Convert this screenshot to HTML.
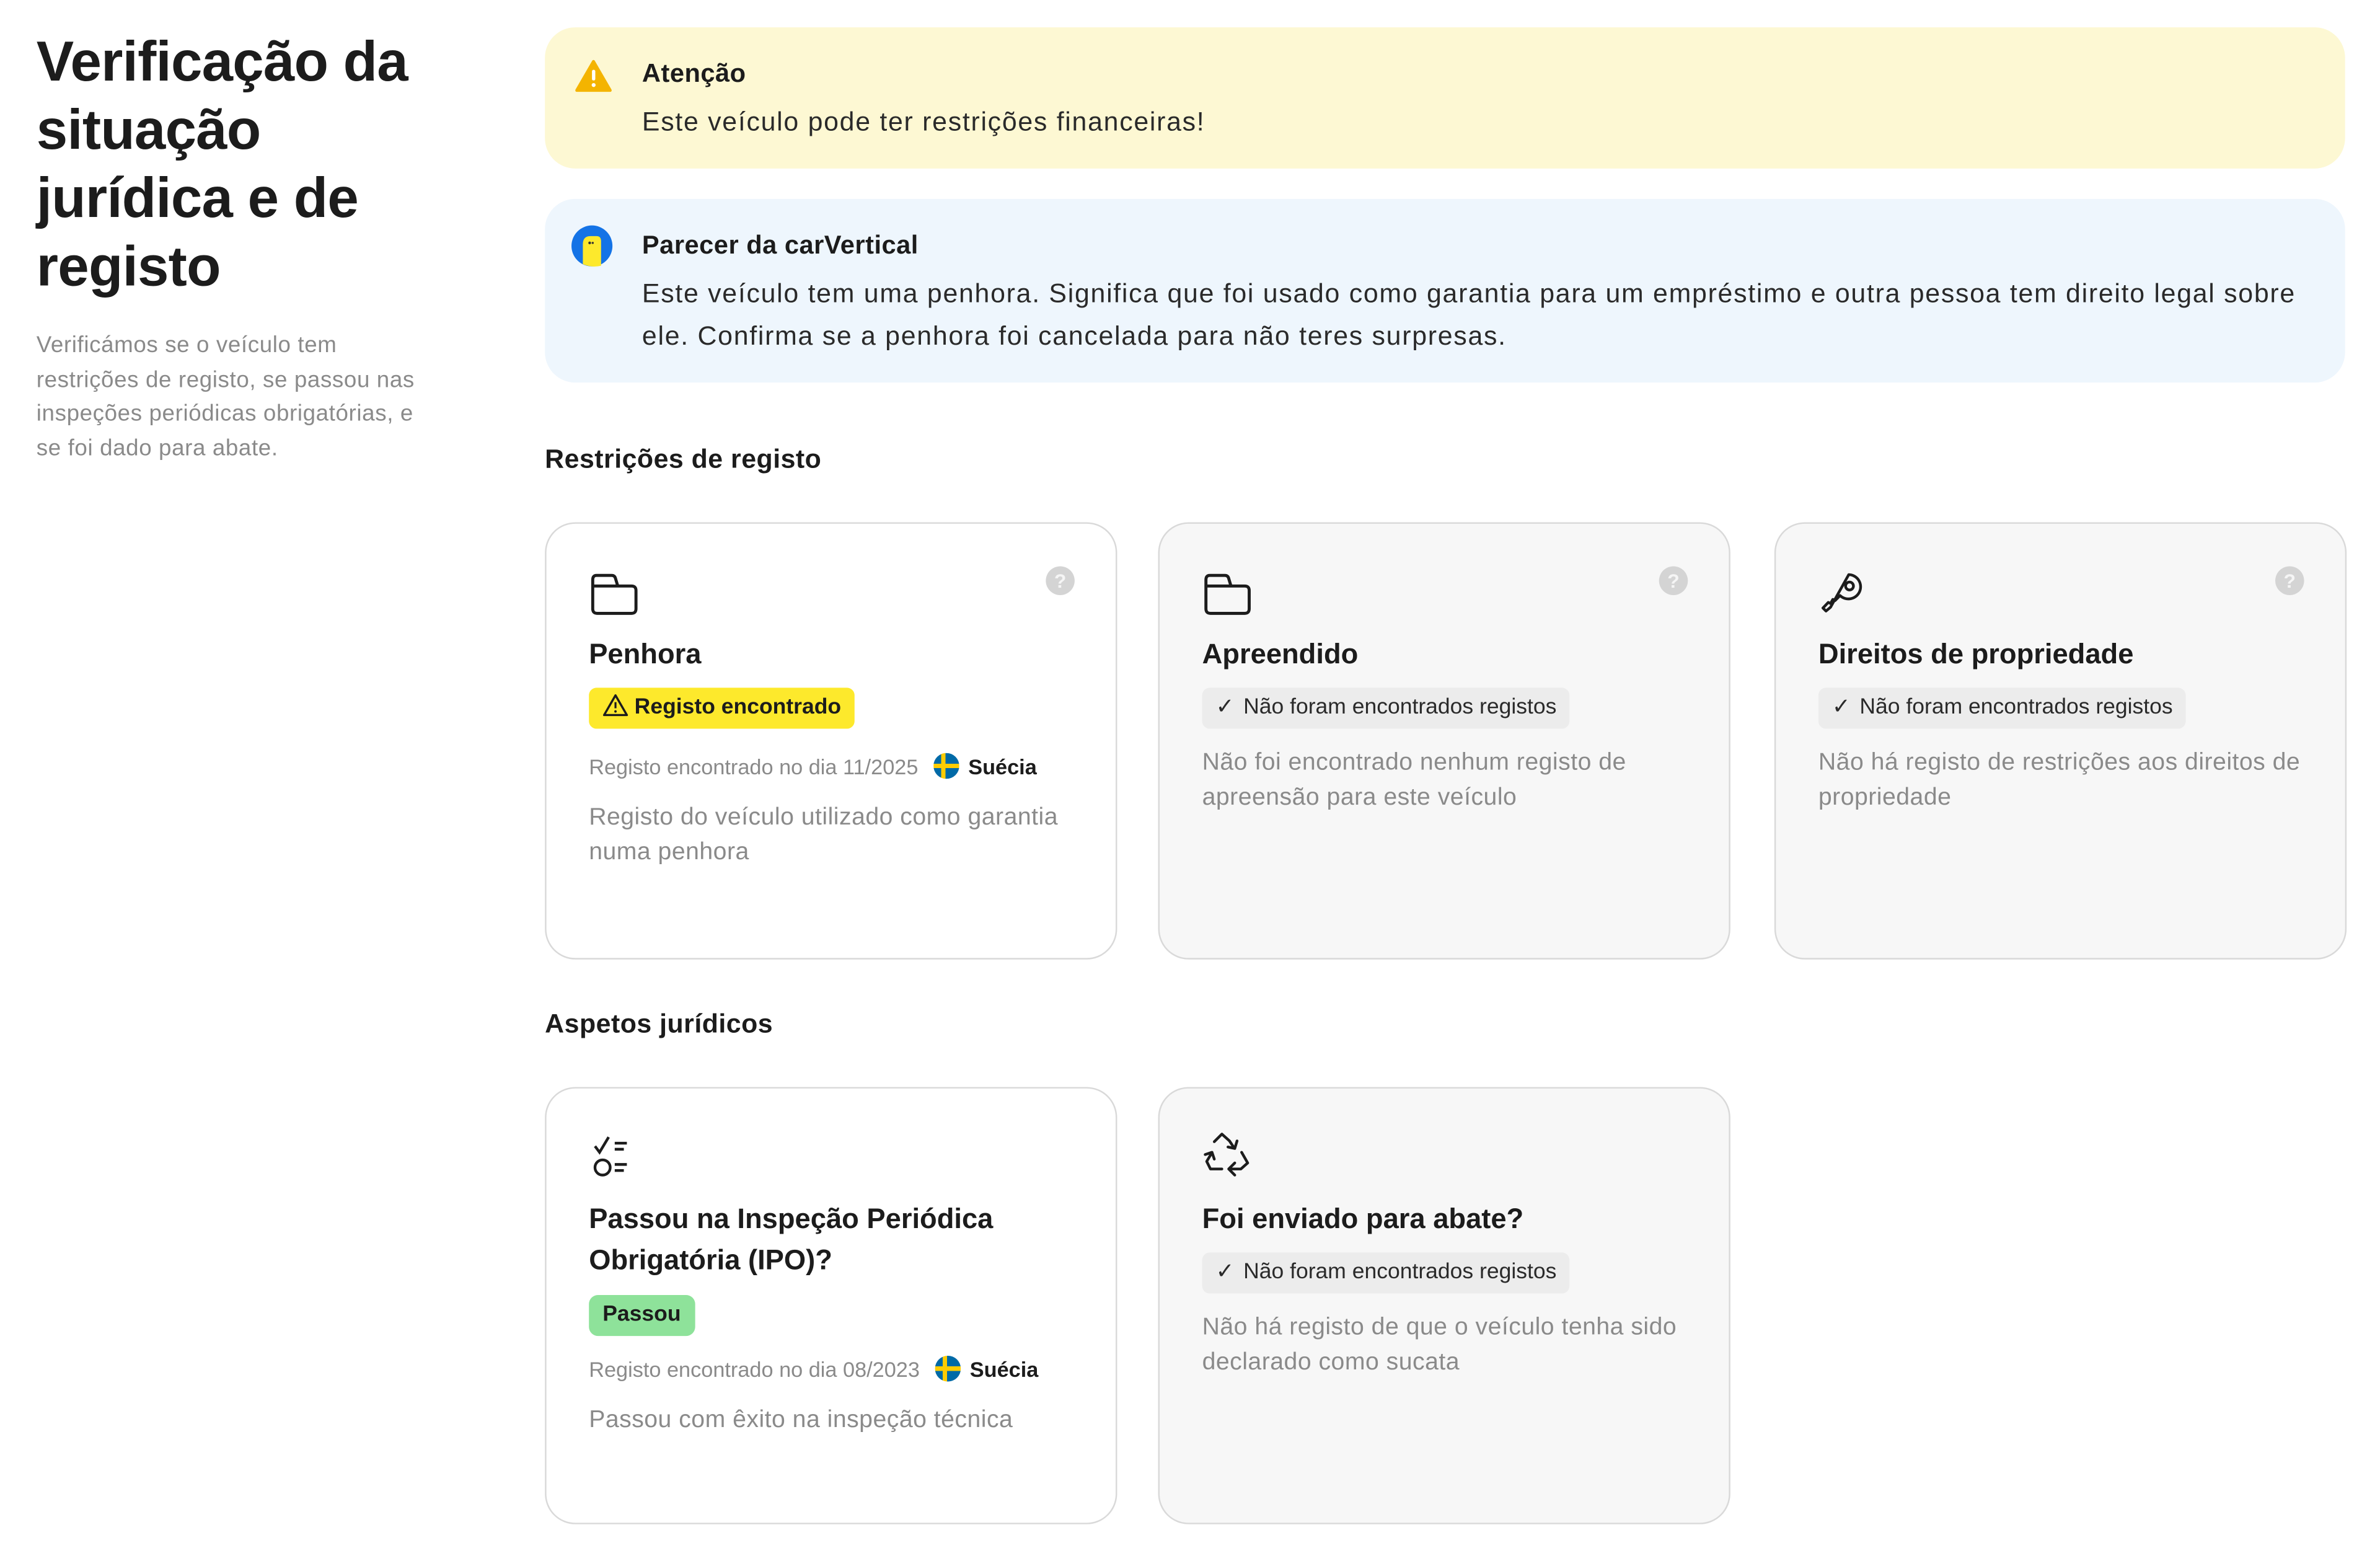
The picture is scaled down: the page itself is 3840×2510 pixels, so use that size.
<!DOCTYPE html>
<html><head><meta charset="utf-8">
<style>
*{box-sizing:border-box;margin:0;padding:0}
html,body{width:3840px;height:2510px;overflow:hidden;background:#fff}
#w{position:absolute;left:0;top:0;width:1568px;height:1025px;transform:scale(2.44898);transform-origin:0 0;font-family:"Liberation Sans",Arial,sans-serif;color:#1c1c1c}
.a{position:absolute}
h1{position:absolute;left:24px;top:18px;font-size:37px;line-height:45px;font-weight:700;letter-spacing:-0.3px;width:265px}
.desc{left:24px;top:217px;font-size:15px;line-height:22.7px;color:#8a8a8a;letter-spacing:0.25px;white-space:nowrap}
.box{left:359px;width:1186px;border-radius:20px}
.bt{font-size:17px;font-weight:700;letter-spacing:0.2px}
.bx{font-size:17.5px;line-height:28px;color:#2a2a2a;letter-spacing:0.7px}
.sec{left:359px;font-size:17.5px;font-weight:700;letter-spacing:0.2px}
.card{position:absolute;width:377px;height:288px;border:1.3px solid #d9d9d9;border-radius:20px;background:#f7f7f7}
.card.w{background:#fff}
.q{position:absolute;right:27px;top:28px;width:19px;height:19px;border-radius:50%;background:#d4d4d4;color:#f5f5f5;font-size:13px;font-weight:700;text-align:center;line-height:19px}
.ic{position:absolute;left:28px;top:30px}
.ct{position:absolute;left:28px;top:72px;font-size:18.5px;font-weight:700;line-height:27px;width:330px}
.badge{position:absolute;left:28px;height:27px;border-radius:5px;font-size:14.5px;line-height:27px;padding:0 9px 0 9px;white-space:nowrap}
.by{background:#fde92c;color:#1c1c1c;font-weight:700}
.bg{background:#8ee29a;font-weight:700}
.bn{background:#ececec;color:#2a2a2a}
.meta{position:absolute;left:28px;font-size:14px;color:#8a8a8a;white-space:nowrap;display:flex;align-items:center}
.meta b{color:#1c1c1c;margin-left:6px}
.flag{width:17px;height:17px;border-radius:50%;margin-left:10px;background:linear-gradient(90deg,transparent 5px,#fecc02 5px,#fecc02 8px,transparent 8px),linear-gradient(180deg,#006aa7 7px,#fecc02 7px,#fecc02 10px,#006aa7 10px)}
.cd{position:absolute;left:28px;width:330px;font-size:16px;line-height:22.5px;color:#8a8a8a;letter-spacing:0.2px}
</style></head><body><div id="w">
<h1>Verificação da situação jurídica e de registo</h1>
<div class="a desc">Verificámos se o veículo tem<br>restrições de registo, se passou nas<br>inspeções periódicas obrigatórias, e<br>se foi dado para abate.</div>

<div class="a box" style="top:18px;height:93px;background:#fdf8d3">
 <svg class="a" style="left:20px;top:21px" width="24" height="22" viewBox="0 0 24 22"><path d="M12 1.5 L23 20.5 H1 Z" fill="#f4b400" stroke="#f4b400" stroke-width="2" stroke-linejoin="round"/><rect x="11" y="7" width="2.2" height="7" rx="1" fill="#fff"/><circle cx="12.1" cy="17" r="1.3" fill="#fff"/></svg>
 <div class="a bt" style="left:64px;top:21px">Atenção</div>
 <div class="a bx" style="left:64px;top:48px">Este veículo pode ter restrições financeiras!</div>
</div>

<div class="a box" style="top:131px;height:121px;background:#eef6fd">
 <svg class="a" style="left:17px;top:17px" width="28" height="28" viewBox="0 0 28 28"><circle cx="14" cy="14" r="13.5" fill="#1473e6"/><path d="M8 13 Q8 7.5 13 7.5 H17 Q20 7.5 20 11 V27 Q14 28.5 8 26 Z" fill="#fde92c"/><circle cx="12.5" cy="12" r=".9" fill="#333"/><circle cx="14.5" cy="12" r=".7" fill="#333"/></svg>
 <div class="a bt" style="left:64px;top:21px">Parecer da carVertical</div>
 <div class="a bx" style="left:64px;top:48px;width:1110px">Este veículo tem uma penhora. Significa que foi usado como garantia para um empréstimo e outra pessoa tem direito legal sobre ele. Confirma se a penhora foi cancelada para não teres surpresas.</div>
</div>

<div class="a sec" style="top:292px">Restrições de registo</div>

<div class="card w" style="left:359px;top:344px">
 <svg class="ic" width="34" height="32" viewBox="0 0 34 32"><path d="M2.5 7 V26 Q2.5 29 5.5 29 H28 Q31 29 31 26 V14 Q31 11 28 11 H19 L17.5 6 Q17 4 15 4 H5 Q2.5 4 2.5 7 Z M2.5 11 H19" fill="none" stroke="#1c1c1c" stroke-width="2"/></svg>
 <div class="q">?</div>
 <div class="ct">Penhora</div>
 <div class="badge by" style="top:108px;padding-left:9px"><svg width="17" height="15" viewBox="0 0 17 15" style="vertical-align:-2px;margin-right:4px"><path d="M8.5 1 L16 14 H1 Z" fill="none" stroke="#1c1c1c" stroke-width="1.4" stroke-linejoin="round"/><path d="M8.5 5.5 V9.5" stroke="#1c1c1c" stroke-width="1.3"/><circle cx="8.5" cy="11.6" r=".8" fill="#1c1c1c"/></svg>Registo encontrado</div>
 <div class="meta" style="top:151px">Registo encontrado no dia 11/2025<span class="flag"></span><b>Suécia</b></div>
 <div class="cd" style="top:183px">Registo do veículo utilizado como garantia numa penhora</div>
</div>

<div class="card" style="left:763px;top:344px">
 <svg class="ic" width="34" height="32" viewBox="0 0 34 32"><path d="M2.5 7 V26 Q2.5 29 5.5 29 H28 Q31 29 31 26 V14 Q31 11 28 11 H19 L17.5 6 Q17 4 15 4 H5 Q2.5 4 2.5 7 Z M2.5 11 H19" fill="none" stroke="#1c1c1c" stroke-width="2"/></svg>
 <div class="q">?</div>
 <div class="ct">Apreendido</div>
 <div class="badge bn" style="top:108px"><span style="margin-right:6px">✓</span>Não foram encontrados registos</div>
 <div class="cd" style="top:147px">Não foi encontrado nenhum registo de apreensão para este veículo</div>
</div>

<div class="card" style="left:1169px;top:344px">
 <svg class="ic" width="32" height="32" viewBox="0 0 32 32"><path d="M20 3.5 A8 8 0 1 1 14.3 17.3 L11 20.6 L9.5 19.8 L8 22.5 L6.5 21.8 L3 25.5 L5 27.5 L8 25 Z" fill="none" stroke="#1c1c1c" stroke-width="1.8" stroke-linejoin="round"/><circle cx="20.5" cy="11" r="2.6" fill="none" stroke="#1c1c1c" stroke-width="1.8"/></svg>
 <div class="q">?</div>
 <div class="ct">Direitos de propriedade</div>
 <div class="badge bn" style="top:108px"><span style="margin-right:6px">✓</span>Não foram encontrados registos</div>
 <div class="cd" style="top:147px">Não há registo de restrições aos direitos de propriedade</div>
</div>

<div class="a sec" style="top:664px">Aspetos jurídicos</div>

<div class="card w" style="left:359px;top:716px">
 <svg class="ic" width="34" height="34" viewBox="0 0 34 34"><path d="M4 8 L7 12 L13 2" fill="none" stroke="#1c1c1c" stroke-width="1.8"/><path d="M17 6 H25 M17 10 H23 M17 20 H25 M17 24 H23" stroke="#1c1c1c" stroke-width="1.8"/><circle cx="9" cy="22" r="5" fill="none" stroke="#1c1c1c" stroke-width="1.8"/></svg>
 <div class="ct">Passou na Inspeção Periódica Obrigatória (IPO)?</div>
 <div class="badge bg" style="top:136px;border-radius:6px">Passou</div>
 <div class="meta" style="top:176px">Registo encontrado no dia 08/2023<span class="flag"></span><b>Suécia</b></div>
 <div class="cd" style="top:208px">Passou com êxito na inspeção técnica</div>
</div>

<div class="card" style="left:763px;top:716px">
 <svg class="ic" style="left:28px;top:28px" width="36" height="36" viewBox="0 0 36 36"><g fill="none" stroke="#1c1c1c" stroke-width="1.8" stroke-linecap="round" stroke-linejoin="round"><path d="M8 7 L13 2 L18 6.5 L21 11 M17 10.5 L21.5 11.5 L23 6.5"/><path d="M26 14 L30 21 L25.5 25 L18 25 M21.5 21 L17.5 25 L21.5 29"/><path d="M13 25 L5.5 25 L3 20 L6 15 M2 15.5 L6.5 14 L8 18.5"/></g></svg>
 <div class="ct">Foi enviado para abate?</div>
 <div class="badge bn" style="top:108px"><span style="margin-right:6px">✓</span>Não foram encontrados registos</div>
 <div class="cd" style="top:147px">Não há registo de que o veículo tenha sido declarado como sucata</div>
</div>
</div></body></html>
